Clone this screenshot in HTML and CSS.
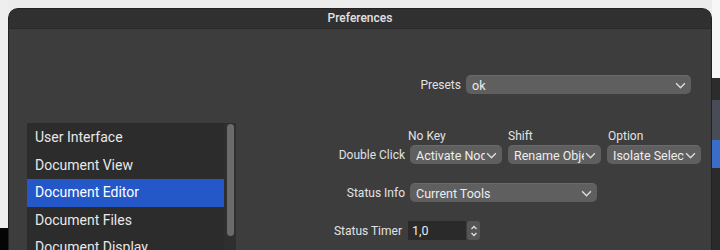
FILE: index.html
```html
<!DOCTYPE html>
<html lang="en">
  <head>
    <meta charset="UTF-8" />
    <meta name="viewport" content="width=device-width, initial-scale=1.0" />
    <title>Preferences</title>
    <link rel="stylesheet" href="styles.css">
  </head>
  <body>
    <div class="edge edge-left"></div>
    <div class="window">
      <div class="titlebar">Preferences</div>
      <div class="content">
        <aside class="sidebar">
          <ul class="list">
            <li>User Interface</li>
            <li>Document View</li>
            <li class="selected">Document Editor</li>
            <li>Document Files</li>
            <li>Document Display</li>
          </ul>
          <div class="scrollbar"><div class="thumb"></div></div>
        </aside>

        <section class="panel">
          <div class="row presets">
            <label class="label">Presets</label>
            <div class="select select-wide">
              <span class="value">ok</span>
              <svg class="chevron" viewBox="0 0 10 6"><path d="M1 1l4 4 4-4" /></svg>
            </div>
          </div>

          <div class="modifiers">
            <span class="mod">No Key</span>
            <span class="mod">Shift</span>
            <span class="mod">Option</span>
          </div>
          <div class="row">
            <label class="label">Double Click</label>
            <div class="select select-a">
              <span class="value">Activate Node</span>
              <svg class="chevron" viewBox="0 0 10 6"><path d="M1 1l4 4 4-4" /></svg>
            </div>
            <div class="select select-b">
              <span class="value">Rename Object</span>
              <svg class="chevron" viewBox="0 0 10 6"><path d="M1 1l4 4 4-4" /></svg>
            </div>
            <div class="select select-c">
              <span class="value">Isolate Selection</span>
              <svg class="chevron" viewBox="0 0 10 6"><path d="M1 1l4 4 4-4" /></svg>
            </div>
          </div>

          <div class="row status-info">
            <label class="label">Status Info</label>
            <div class="select select-info">
              <span class="value">Current Tools</span>
              <svg class="chevron" viewBox="0 0 10 6"><path d="M1 1l4 4 4-4" /></svg>
            </div>
          </div>

          <div class="row status-timer">
            <label class="label">Status Timer</label>
            <div class="field">1,0</div>
            <div class="stepper">
              <svg viewBox="0 0 8 14"><path d="M1.5 5l2.5-2.5 2.5 2.5M1.5 9l2.5 2.5 2.5-2.5" /></svg>
            </div>
          </div>
        </section>
      </div>
    </div>
    <div class="edge edge-right"></div>
  </body>
</html>
```

FILE: styles.css
```css
html,
body {
  height: 100%;
}

body {
  margin: 0;
  display: flex;
  overflow: hidden;
  background-color: #ececec;
  font-family: Roboto, "Noto Sans", sans-serif;
  color: #e6e6e6;
}

.edge {
  flex: none;
  width: 8px;
}

.edge-left {
  background: linear-gradient(#eeeeee 0, #eeeeee 228px, #050505 228px);
}

.edge-right {
  background: linear-gradient(
    #f7f7f7 0,
    #f7f7f7 78px,
    #2c2c2c 78px,
    #2c2c2c 100px,
    #474c57 100px,
    #474c57 140px,
    #3a6cc9 140px,
    #3a6cc9 168px,
    #2a2a2a 168px
  );
}

.window {
  flex: none;
  width: 702px;
  margin-top: 8px;
  background-color: #3d3d3d;
  border: 1px solid #222;
  border-bottom: none;
  border-radius: 10px 10px 0 0;
  overflow: hidden;
}

.titlebar {
  height: 19px;
  line-height: 19px;
  text-align: center;
  font-size: 12px;
  font-weight: 500;
  color: #e2e2e2;
  background-color: #303030;
  border-bottom: 1px solid #2a2a2a;
}

.content {
  display: flex;
  padding-left: 18px;
}

/* left list */
.sidebar {
  position: relative;
  width: 209px;
  margin-top: 94px;
  height: 140px;
  background-color: #2c2c2c;
}

.list {
  list-style: none;
  margin: 0;
  padding: 1px 12px 0 0;
}

.list li {
  height: 27.5px;
  line-height: 27.5px;
  padding-left: 8px;
  font-size: 14px;
  color: #e8e8e8;
}

.list li.selected {
  background-color: #2457c7;
  color: #fff;
}

.scrollbar {
  position: absolute;
  top: 0;
  right: 0;
  width: 12px;
  bottom: 0;
  background-color: #2f2f2f;
}

.thumb {
  margin: 1px 2px 0 3px;
  height: 112px;
  border-radius: 4px;
  background-color: #6b6b6b;
}

/* right panel */
.panel {
  display: flex;
  flex-direction: column;
  padding-top: 46px;
}

.row {
  display: flex;
  align-items: center;
  gap: 6px;
}

.label {
  width: 169px;
  text-align: right;
  font-size: 12px;
  color: #e2e2e2;
}

.presets .label {
  width: 225px;
}

.select {
  box-sizing: border-box;
  display: flex;
  align-items: center;
  height: 19px;
  padding: 0 5px 0 6px;
  border-radius: 5px;
  background-color: #5f5f5f;
  border-top: 1px solid #6a6a6a;
  font-size: 12.5px;
  color: #ededed;
  overflow: hidden;
}

.select .value {
  flex: 1;
  white-space: nowrap;
  overflow: hidden;
}

.chevron {
  flex: none;
  width: 11px;
  height: 7px;
  margin-left: 1px;
  fill: none;
  stroke: #dcdcdc;
  stroke-width: 1.3;
}

.select-wide {
  width: 225px;
  margin-left: -1px;
}

.modifiers {
  display: flex;
  margin: 35px 0 2px 172px;
  font-size: 12px;
  color: #e2e2e2;
}

.mod {
  width: 100px;
}

.select-a {
  width: 92px;
  margin-left: -1px;
}

.select-b {
  width: 93px;
}

.select-c {
  width: 94px;
}

.status-info {
  margin-top: 19px;
}

.select-info {
  width: 187px;
  margin-left: -1px;
}

.status-timer {
  margin-top: 19px;
  gap: 0;
}

.status-timer .label {
  width: 166px;
  margin-right: 6px;
}

.field {
  box-sizing: border-box;
  width: 58px;
  height: 19px;
  line-height: 19px;
  padding-left: 4px;
  font-size: 12.5px;
  background-color: #2a2a2a;
  color: #eaeaea;
}

.stepper {
  width: 13px;
  height: 19px;
  margin-left: 1px;
  border-radius: 3px;
  background-color: #555;
  display: flex;
  align-items: center;
  justify-content: center;
}

.stepper svg {
  width: 8px;
  height: 14px;
  fill: none;
  stroke: #e0e0e0;
  stroke-width: 1.3;
}
```
